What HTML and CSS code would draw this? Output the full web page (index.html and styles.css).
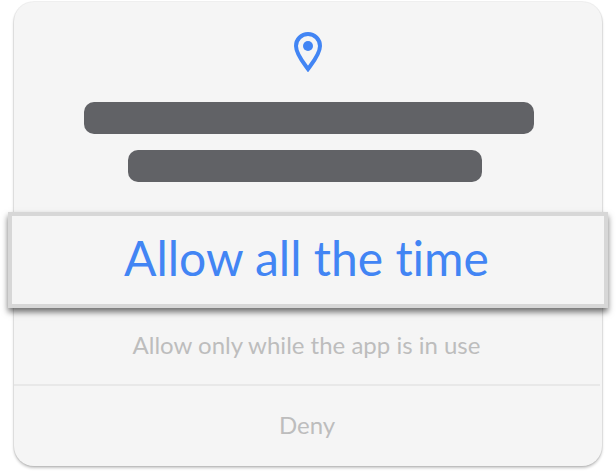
FILE: index.html
```html
<!DOCTYPE html>
<html lang="en">
<head>
<meta charset="utf-8">
<title>Location permission</title>
<link rel="stylesheet" href="styles.css">
</head>
<body>
<main class="dialog">
  <header class="prompt">
    <svg class="pin" viewBox="0 0 28 40" aria-hidden="true">
      <path d="M14 2C7.4 2 2 7.3 2 14c0 8.2 7.6 17 12 23 4.4-6 12-14.800 12-23C26 7.300 20.600 2 14 2Z" fill="none" stroke="#4285f4" stroke-width="4"/>
      <circle cx="14" cy="14" r="5" fill="#4285f4"/>
    </svg>
    <div class="bar bar-long"></div>
    <div class="bar bar-short"></div>
  </header>
  <div class="option featured"><span>Allow all the time</span></div>
  <div class="option limited"><span>Allow only while the app is in use</span></div>
  <div class="option deny"><span>Deny</span></div>
</main>
</body>
</html>
```

FILE: styles.css
```css
* { box-sizing: border-box; }
body {
  margin: 0;
  height: 472px;
  padding: 2px 14px 0;
  overflow: hidden;
  background: #fff;
  font-family: Lato, "Open Sans", sans-serif;
  font-variant-ligatures: none;
}
.dialog {
  display: flex;
  flex-direction: column;
  width: 588px;
  height: 464px;
  border-radius: 20px;
  background: #f5f5f5;
  box-shadow: 0 0 0 1px rgba(0, 0, 0, .055), 0 2px 3px rgba(0, 0, 0, .24);
}
.prompt {
  display: flex;
  flex-direction: column;
  align-items: center;
  height: 210px;
  padding-top: 30px;
}
.pin { width: 28px; height: 40px; margin-bottom: 30px; }
.bar { height: 32px; border-radius: 10px; background: #616266; }
.bar-long { width: 450px; margin-left: 2px; }
.bar-short { width: 354px; margin: 16px 6px 0 0; }
.option {
  display: flex;
  align-items: center;
  justify-content: center;
  white-space: nowrap;
  color: #bdbdbd;
  font-size: 24px;
}
.featured {
  height: 96px;
  margin: 0 -6px;
  padding: 0 3px 5px 0;
  border: 4px solid #d7d7d7;
  background: #f5f5f5;
  box-shadow: 0 4px 6px rgba(0, 0, 0, .55);
  color: #4285f4;
  font-size: 48px;
}
.limited { height: 76px; padding: 0 3px 3px 0; }
.deny {
  height: 82px;
  margin-right: 2px;
  padding-bottom: 3px;
  border-top: 2px solid #e8e8e8;
}
```
